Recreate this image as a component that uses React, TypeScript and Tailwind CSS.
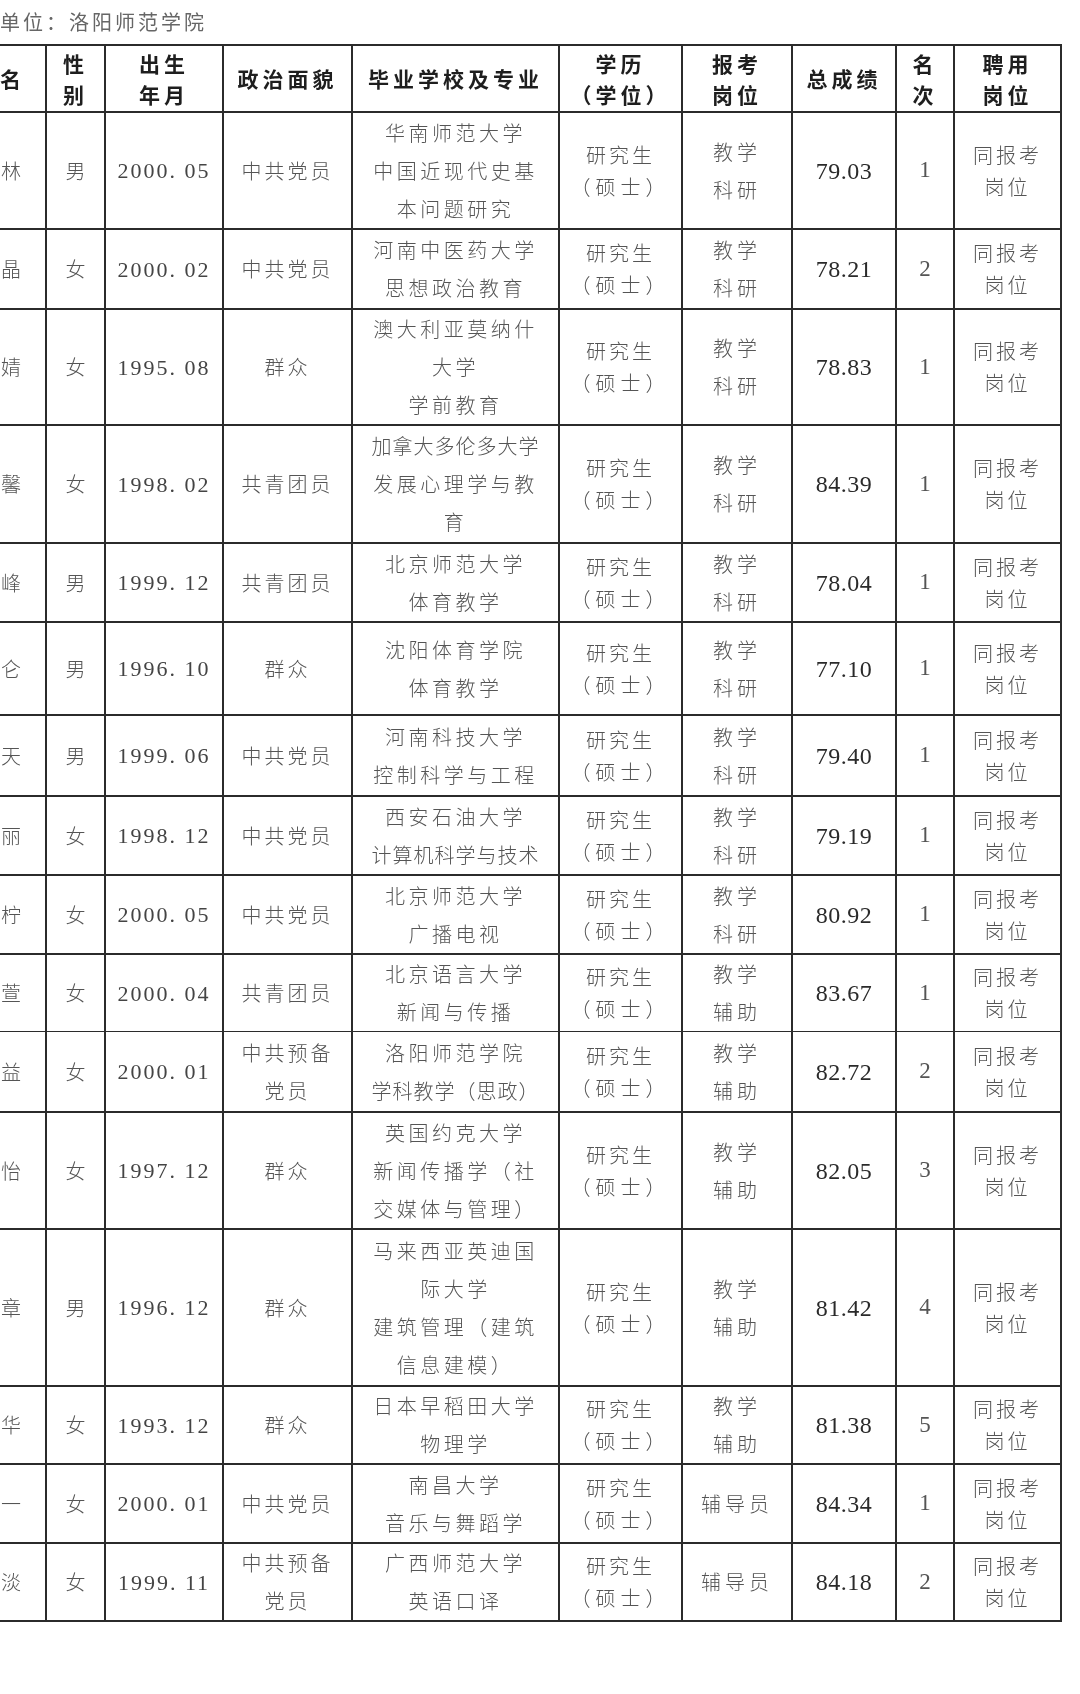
import React from "react";

type Row = {
  h: string;
  name: string;
  sex: string;
  birth: string;
  pol: string[];
  school: string[];
  post: string[];
  score: string;
  rank: string;
};

const rows: Row[] = [
  { h: "h-[115px]", name: "林", sex: "男", birth: "2000. 05", pol: ["中共党员"], school: ["华南师范大学", "中国近现代史基", "本问题研究"], post: ["教学", "科研"], score: "79.03", rank: "1" },
  { h: "h-[78px]", name: "晶", sex: "女", birth: "2000. 02", pol: ["中共党员"], school: ["河南中医药大学", "思想政治教育"], post: ["教学", "科研"], score: "78.21", rank: "2" },
  { h: "h-[114px]", name: "婧", sex: "女", birth: "1995. 08", pol: ["群众"], school: ["澳大利亚莫纳什", "大学", "学前教育"], post: ["教学", "科研"], score: "78.83", rank: "1" },
  { h: "h-[116px]", name: "馨", sex: "女", birth: "1998. 02", pol: ["共青团员"], school: ["加拿大多伦多大学", "发展心理学与教", "育"], post: ["教学", "科研"], score: "84.39", rank: "1" },
  { h: "h-[77px]", name: "峰", sex: "男", birth: "1999. 12", pol: ["共青团员"], school: ["北京师范大学", "体育教学"], post: ["教学", "科研"], score: "78.04", rank: "1" },
  { h: "h-[91px]", name: "仑", sex: "男", birth: "1996. 10", pol: ["群众"], school: ["沈阳体育学院", "体育教学"], post: ["教学", "科研"], score: "77.10", rank: "1" },
  { h: "h-[79px]", name: "天", sex: "男", birth: "1999. 06", pol: ["中共党员"], school: ["河南科技大学", "控制科学与工程"], post: ["教学", "科研"], score: "79.40", rank: "1" },
  { h: "h-[77px]", name: "丽", sex: "女", birth: "1998. 12", pol: ["中共党员"], school: ["西安石油大学", "计算机科学与技术"], post: ["教学", "科研"], score: "79.19", rank: "1" },
  { h: "h-[77px]", name: "柠", sex: "女", birth: "2000. 05", pol: ["中共党员"], school: ["北京师范大学", "广播电视"], post: ["教学", "科研"], score: "80.92", rank: "1" },
  { h: "h-[75px]", name: "萱", sex: "女", birth: "2000. 04", pol: ["共青团员"], school: ["北京语言大学", "新闻与传播"], post: ["教学", "辅助"], score: "83.67", rank: "1" },
  { h: "h-[79px]", name: "益", sex: "女", birth: "2000. 01", pol: ["中共预备", "党员"], school: ["洛阳师范学院", "学科教学（思政）"], post: ["教学", "辅助"], score: "82.72", rank: "2" },
  { h: "h-[115px]", name: "怡", sex: "女", birth: "1997. 12", pol: ["群众"], school: ["英国约克大学", "新闻传播学（社", "交媒体与管理）"], post: ["教学", "辅助"], score: "82.05", rank: "3" },
  { h: "h-[155px]", name: "章", sex: "男", birth: "1996. 12", pol: ["群众"], school: ["马来西亚英迪国", "际大学", "建筑管理（建筑", "信息建模）"], post: ["教学", "辅助"], score: "81.42", rank: "4" },
  { h: "h-[76px]", name: "华", sex: "女", birth: "1993. 12", pol: ["群众"], school: ["日本早稻田大学", "物理学"], post: ["教学", "辅助"], score: "81.38", rank: "5" },
  { h: "h-[77px]", name: "一", sex: "女", birth: "2000. 01", pol: ["中共党员"], school: ["南昌大学", "音乐与舞蹈学"], post: ["辅导员"], score: "84.34", rank: "1" },
  { h: "h-[76px]", name: "淡", sex: "女", birth: "1999. 11", pol: ["中共预备", "党员"], school: ["广西师范大学", "英语口译"], post: ["辅导员"], score: "84.18", rank: "2" },
];

const grid =
  "grid grid-cols-[45px_57px_116px_127px_205px_121px_108px_102px_56px_105px] gap-x-[2px]";
const cell = "bg-white flex flex-col items-center justify-center text-center whitespace-pre";
const cjk = "font-['Noto_Sans_CJK_SC',sans-serif]";

const Head: React.FC<{ lines: string[] }> = ({ lines }) => (
  <div className={`${cell} text-[21px] font-bold leading-[31px] tracking-[4px] text-[#1e1e1e]`}>
    {lines.map((l) => (
      <div key={l}>{l}</div>
    ))}
  </div>
);

export default function App() {
  return (
    <div className={`w-[1080px] h-[1694px] bg-white overflow-hidden ${cjk} blur-[0.4px]`}>
      <div className="h-[44px] flex items-center text-[20px] tracking-[3px] text-[#666]">
        单位：洛阳师范学院
      </div>

      <div className="w-[1062px] flex flex-col gap-y-[2px] bg-[#2b2b2b] pt-[2px] pb-[2px] pr-[2px]">
        <div className={`${grid} h-[65px]`}>
          <div className="bg-white flex items-center text-[21px] font-bold text-[#1e1e1e]">名</div>
          <Head lines={["性", "别"]} />
          <Head lines={["出生", "年月"]} />
          <Head lines={["政治面貌"]} />
          <Head lines={["毕业学校及专业"]} />
          <Head lines={["学历", "（学位）"]} />
          <Head lines={["报考", "岗位"]} />
          <Head lines={["总成绩"]} />
          <Head lines={["名", "次"]} />
          <Head lines={["聘用", "岗位"]} />
        </div>

        {rows.map((r, i) => (
          <div key={i} className={`${grid} ${r.h} text-[20px] font-light text-[#555]`}>
            <div className="bg-white flex items-center pl-[1px]">{r.name}</div>
            <div className={cell}>{r.sex}</div>
            <div className={`${cell} font-['Liberation_Serif',serif] text-[22px] tracking-[2px] text-[#444] font-normal`}>
              {r.birth}
            </div>
            <div className={`${cell} leading-[38px] tracking-[3px]`}>
              {r.pol.map((l) => (
                <div key={l}>{l}</div>
              ))}
            </div>
            <div className={`${cell} leading-[38px]`}>
              {r.school.map((l) => (
                <div key={l} className={l.length >= 8 ? "tracking-[1px]" : "tracking-[3.5px]"}>
                  {l}
                </div>
              ))}
            </div>
            <div className={`${cell} leading-[32px]`}>
              <div className="tracking-[3px]">研究生</div>
              <div className="tracking-[5px]">（硕士）</div>
            </div>
            <div className={`${cell} leading-[38px] tracking-[4px]`}>
              {r.post.map((l) => (
                <div key={l}>{l}</div>
              ))}
            </div>
            <div className={`${cell} font-['Liberation_Serif',serif] text-[24px] font-normal tracking-[0.5px] text-[#2a2a2a]`}>
              {r.score}
            </div>
            <div className={`${cell} font-['Liberation_Serif',serif] text-[23px] font-normal text-[#555]`}>
              {r.rank}
            </div>
            <div className={`${cell} leading-[32px] tracking-[3px]`}>
              <div>同报考</div>
              <div>岗位</div>
            </div>
          </div>
        ))}
      </div>
    </div>
  );
}
